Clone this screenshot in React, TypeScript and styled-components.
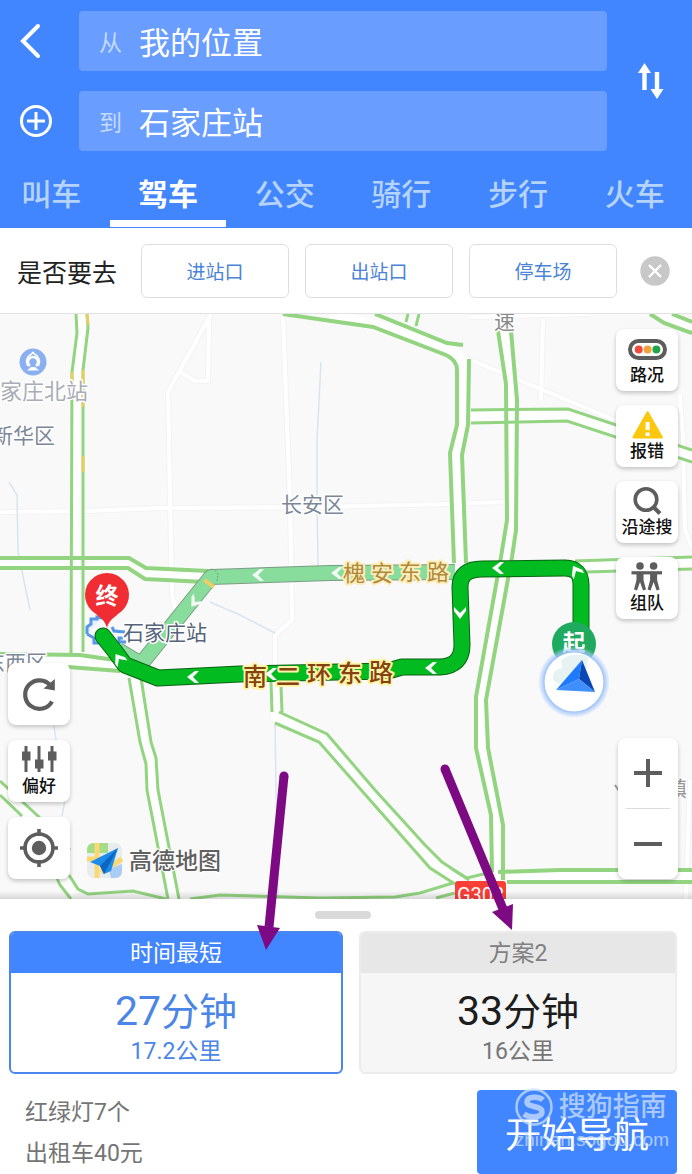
import React, { useState } from 'react';
import styled, { createGlobalStyle } from 'styled-components';

const BLUE = '#4185ff';
const GREY = '#5d5d5d';
const ROAD = '#92d480';

const GlobalStyle = createGlobalStyle`
  *, *::before, *::after { box-sizing: border-box; }
  body {
    margin: 0;
    background: #fff;
    font-family: Roboto, "Noto Sans CJK SC", sans-serif;
    color: #222;
  }
  button, input { font: inherit; color: inherit; }
  button { margin: 0; padding: 0; border: 0; background: none; cursor: pointer; }
`;

const Page = styled.div`
  display: flex;
  flex-direction: column;
  min-height: 100vh;
  overflow: hidden;
`;

/* ---------- header ---------- */

const Header = styled.header`
  background: ${BLUE};
  color: #fff;
  padding-top: 11px;
`;

const RouteForm = styled.form`
  display: grid;
  grid-template-columns: 79px 1fr 85px;
`;

const Side = styled.div`
  display: flex;
  flex-direction: column;
  gap: 20px;
`;

const IconButton = styled.button`
  display: flex;
  align-items: center;
  height: 60px;
  padding-left: 19px;
`;

const SwapButton = styled.button`
  display: flex;
  align-items: center;
  justify-content: center;
`;

const Field = styled.label`
  display: flex;
  align-items: center;
  height: 60px;
  padding-left: 20px;
  border-radius: 4px;
  background: #699dff;
`;

const FieldName = styled.span`
  width: 40px;
  font-size: 23px;
  color: #c4dafc;
`;

const FieldInput = styled.input`
  flex: 1;
  min-width: 0;
  height: 58px;
  padding: 0 0 2px;
  border: 0;
  outline: 0;
  background: transparent;
  font-size: 31px;
`;

const Tabs = styled.nav`
  display: grid;
  grid-template-columns: repeat(6, 1fr);
  margin: 0 -1px 0 -7px;
`;

const Tab = styled.button<{ $active: boolean }>`
  position: relative;
  height: 77px;
  padding-top: 5px;
  font-size: 30px;
  font-weight: ${p => (p.$active ? 700 : 500)};
  color: ${p => (p.$active ? '#fff' : '#b5d3fb')};

  &::after {
    content: '';
    position: absolute;
    inset: auto 0 1px;
    height: 7px;
    background: ${p => (p.$active ? '#fff' : 'transparent')};
  }
`;

/* ---------- suggestions ---------- */

const Suggest = styled.section`
  display: flex;
  align-items: center;
  height: 86px;
  padding: 0 22px 0 17px;
  border-bottom: 1px solid #e2e2e2;
`;

const SuggestTitle = styled.span`
  margin-right: 24px;
  font-size: 25px;
  white-space: nowrap;
`;

const SuggestList = styled.div`
  display: flex;
  flex: 1;
  gap: 16px;
`;

const SuggestButton = styled.button`
  flex: 1;
  height: 54px;
  border: 1px solid #dedee0;
  border-radius: 6px;
  font-size: 19px;
  color: #4b83d6;
`;

const CloseButton = styled.button`
  display: flex;
  margin-left: 23px;
`;

/* ---------- map ---------- */

const MapArea = styled.main`
  position: relative;
  flex: 1;
  min-height: 585px;
`;

const MapCanvas = styled.svg`
  position: absolute;
  inset: 0;
  width: 100%;
  height: 100%;
  background: #f9f9fa;
`;

const Arrows = styled.svg`
  position: absolute;
  inset: 0;
  z-index: 3;
  width: 100%;
  height: 100%;
  overflow: visible;
  pointer-events: none;
`;

const Controls = styled.div<{ $side: 'left' | 'right' }>`
  position: absolute;
  z-index: 1;
  top: 15px;
  bottom: 20px;
  ${p => (p.$side === 'left' ? 'left: 8px' : 'right: 14px')};
  display: flex;
  flex-direction: column;
  align-items: flex-end;
  justify-content: ${p => (p.$side === 'left' ? 'flex-end' : 'flex-start')};
  gap: ${p => (p.$side === 'left' ? 15 : 14)}px;
`;

const MapButton = styled.button`
  display: flex;
  flex-direction: column;
  align-items: center;
  justify-content: center;
  width: 62px;
  height: 62px;
  border-radius: 8px;
  background: #fff;
  box-shadow: 0 2px 4px rgba(0, 0, 0, 0.22);
  font-size: 17px;
  font-weight: 500;
  line-height: 18px;
  color: #111;

  svg { display: block; overflow: visible; }
`;

const Zoom = styled.div`
  display: flex;
  flex-direction: column;
  width: 60px;
  margin-top: auto;
  border-radius: 8px;
  background: #fff;
  box-shadow: 0 2px 4px rgba(0, 0, 0, 0.22);
`;

const ZoomButton = styled.button`
  display: flex;
  align-items: center;
  justify-content: center;
  height: 70px;
`;

const ZoomRule = styled.span`
  height: 1px;
  margin: 0 8px;
  background: #dcdcdc;
`;

/* ---------- bottom sheet ---------- */

const Sheet = styled.section`
  padding: 12px 15px 0 9px;
  background: #fff;
`;

const Handle = styled.div`
  width: 56px;
  height: 8px;
  margin: 0 auto 12px;
  border-radius: 4px;
  background: #d9d9d9;
`;

const Plans = styled.div`
  display: grid;
  grid-template-columns: 21fr 20fr;
  gap: 16px;
`;

const Plan = styled.button<{ $active: boolean }>`
  display: flex;
  flex-direction: column;
  height: 143px;
  overflow: hidden;
  border: 2px solid ${p => (p.$active ? '#4a86ee' : '#ececec')};
  border-radius: 6px;
  background: ${p => (p.$active ? '#fff' : '#f6f6f6')};
  color: ${p => (p.$active ? '#4b86e6' : '#757575')};
`;

const PlanHead = styled.span<{ $active: boolean }>`
  width: 100%;
  padding-top: 2px;
  background: ${p => (p.$active ? BLUE : '#e7e7e7')};
  color: ${p => (p.$active ? '#fff' : '#808080')};
  font-size: 23px;
  line-height: 38px;
`;

const PlanTime = styled.span<{ $active: boolean }>`
  width: 100%;
  padding-top: 15px;
  font-size: 38px;
  line-height: 46px;
  color: ${p => (p.$active ? '#4b86e6' : '#1d1d1d')};
`;

const Minutes = styled.span`
  font-size: 41px;
`;

const PlanLength = styled.span`
  width: 100%;
  font-size: 23px;
  line-height: 34px;
`;

const Footer = styled.div`
  display: flex;
  justify-content: space-between;
  margin-top: 16px;
`;

const Facts = styled.div`
  padding: 2px 0 0 16px;
  font-size: 23px;
  line-height: 41px;
  color: #757575;
`;

const StartWrap = styled.div`
  position: relative;
  width: 200px;
`;

const StartButton = styled.button`
  width: 100%;
  height: 84px;
  border-radius: 4px;
  background: ${BLUE};
  color: #fff;
  font-size: 36px;
`;

const Watermark = styled.div`
  position: absolute;
  top: -6px;
  right: 8px;
  display: grid;
  grid-template-columns: 38px auto;
  column-gap: 6px;
  align-items: center;
  justify-content: end;
  color: rgba(205, 225, 255, 0.75);
  pointer-events: none;
`;

const MarkName = styled.span`
  font-size: 27px;
  font-weight: 500;
  line-height: 46px;
`;

const MarkSite = styled.span`
  grid-column: 1 / -1;
  font-family: "Liberation Sans", sans-serif;
  font-size: 19px;
  line-height: 20px;
  text-align: right;
`;

/* ---------- drawings ---------- */

const minorRoads = [
  'M211 314 L168 392 L170 500 L172 595 L176 612 M209 320 L208 381 L195 381 L180 372',
  'M0 512 L85 511 L160 508 L320 507 L450 504 M468 503 L505 502',
  'M283 317 L290 500 L292 620 L275 635 L275 672',
  'M466 358 L543 390 L615 420 M543 319 L541 400 M470 317 L590 314',
  'M680 395 L683 440 L685 530 L692 548 M690 780 L686 899',
];

const roads = [
  'M76 314 L77 333 L72 372 L71 656',
  'M87 314 L88 328 L83 370 L83 652',
  'M408 314 L406 322 M419 314 L416 326',
  'M471 410 L568 409 L692 450 M471 423 L567 421 L692 462',
  'M575 561 L692 557 M585 572 L692 569',
  'M129 678 L140 742 L146 764 L147 790 L168 899',
  'M141 678 L151 742 L156 758 L158 790 L179 899',
  'M0 781 L38 816 M0 795 L22 816 M38 816 L70 850 M56 876 L60 885 L71 899',
  'M69 875 L78 889 L88 894 L133 891 L166 899',
  'M190 899 L220 895 L320 898 L395 897 L420 893 L453 883',
  'M271 682 L272 712 M281 686 L282 712',
  'M279 712 L327 734 L375 790 L425 845 L442 862 L469 880',
  'M275 723 L319 742 L370 800 L430 868 L455 884',
  'M452 869 L467 878 L492 872 M436 898 L455 893',
];

const wideRoads = [
  'M0 558 L129 558 L146 568 L208 571',
  'M0 568 L128 568 L145 579 L205 582',
  'M283 314 L373 327 L446 355 Q457 360 457 370 L457 425 L450 453 L454 563',
  'M375 314 L447 343 L463 345 M469 359 L468 425 L462 455 L466 563',
  'M498 331 L506 384 L507 520 L501 557 L476 697 L476 748 L491 815 L492 872',
  'M511 331 L517 400 L516 530 L512 557 L486 700 L488 748 L503 825 L503 880',
  'M650 314 L664 323 L692 333 M672 314 L692 322',
  'M0 654 L80 655 L115 660 M68 667 L120 671',
  'M498 872 L560 870 L692 870 M507 882 L692 882',
];

const casings = [
  'M82 314 L83 330 L77 372 L77 660',
  'M0 563 L129 563 L146 574 L208 577',
  'M330 314 L410 335 L455 352 L463 362 L463 425 L456 454 L460 563',
  'M504 331 L512 390 L512 520 L506 557 L481 698 L482 748 L497 820 L498 880',
  'M471 416 L568 415 L692 456',
  'M575 567 L692 563',
  'M660 314 L692 328',
  'M135 678 L146 742 L152 764 L153 790 L173 899',
  'M276 682 L277 716 L323 738 L373 795 L430 858 L462 884',
  'M0 661 L80 661 L118 666',
  'M0 788 L30 816 L64 880 L75 895',
  'M498 876 L692 876',
];

const MAIN_ROUTE =
  'M581 655 L581 585 Q581 568 565 568 L482 569 Q460 569 460 587 L462 645 Q462 666 440 667 L402 667 L388 671 L240 674 L158 678 L125 665 L114 650 L103 636';
const ALT_ROUTE = 'M455 572 L330 573 L211 577 L141 664 L118 650';

const chevrons: [number, number, number, string][] = [
  [498, 568, 0, '#fff'],
  [576, 571, 60, '#fff'],
  [460, 613, -90, '#fff'],
  [431, 668, 0, '#fff'],
  [271, 674, 0, '#fff'],
  [193, 677, 0, '#fff'],
  [119, 659, 55, '#fff'],
  [258, 575, 0, '#f1fbf3'],
  [337, 573, 0, '#f1fbf3'],
  [195, 602, -52, '#f1fbf3'],
];

function CityMap() {
  return (
    <MapCanvas viewBox="0 314 692 585" preserveAspectRatio="xMidYMid slice" role="img" aria-label="路线地图">
      <defs>
        <radialGradient id="glow">
          <stop offset="0.8" stopColor="#8db9fb" />
          <stop offset="0.9" stopColor="#a9caf9" stopOpacity="0.6" />
          <stop offset="1" stopColor="#a9caf9" stopOpacity="0" />
        </radialGradient>
        <linearGradient id="fade" x1="0" y1="0" x2="0" y2="1">
          <stop offset="0" stopColor="#000" stopOpacity="0" />
          <stop offset="1" stopColor="#000" stopOpacity="0.14" />
        </linearGradient>
      </defs>

      <g fill="none" stroke="#f3f3f5" strokeWidth="6">
        {minorRoads.map(d => <path key={d} d={d} />)}
      </g>
      <g fill="none" stroke="#fff" strokeWidth="4">
        {minorRoads.map(d => <path key={d} d={d} />)}
      </g>
      <g fill="none" stroke="#d8e5f0" strokeWidth="1.5">
        <path d="M321 362 L317 440 L317 500 L318 566 M9 482 L17 495 L18 552 L30 610" />
        <path d="M210 602 L240 615 L275 633 M275 724 L276 790 L278 899 M54 726 L56 740 M65 800 L62 816" />
      </g>

      <g fill="none" stroke="#fff" strokeWidth="11">
        {casings.map(d => <path key={d} d={d} />)}
      </g>
      <g fill="none" stroke={ROAD} strokeWidth="3">
        {roads.map(d => <path key={d} d={d} />)}
      </g>
      <g fill="none" stroke={ROAD} strokeWidth="4">
        {wideRoads.map(d => <path key={d} d={d} />)}
      </g>
      <path
        d="M87 314 L88 325 M83 370 L83 407 M83 456 L83 472 M72 372 L72 382"
        fill="none" stroke="#e3cf62" strokeWidth="3"
      />

      <g fill="none" strokeLinejoin="round">
        <path d={ALT_ROUTE} stroke="#7d9c85" strokeWidth="16" />
        <path d={ALT_ROUTE} stroke="#88dc9c" strokeWidth="14" />
        <path d="M204 580 L214 587" stroke="#e8cf6a" strokeWidth="4" />
        <path d="M205 573 Q212 565 218 574 L217 582" stroke="#6fa57c" strokeDasharray="2 1" />
      </g>
      <path
        d="M87 634 L87 627 L91 624 L91 619 L97 619 L97 617 L102 618 M112 627 L114 631 L125 632 M123 638 L119 638 L119 642 L126 642 M103 643 L94 643 L94 638 L87 634"
        fill="#e6f0fc" stroke="#5797e6" strokeWidth="3"
      />
      <g fill="none" strokeLinejoin="round" strokeLinecap="round">
        <path d={MAIN_ROUTE} stroke="#0b6412" strokeWidth="17" />
        <path d={MAIN_ROUTE} stroke="#02bb20" strokeWidth="15" />
      </g>
      {chevrons.map(([x, y, r, fill]) => (
        <path
          key={`${x}-${y}`}
          d="M-6 0 L2 -6 L6 -6 L0 0 L6 6 L2 6 Z"
          fill={fill}
          transform={`translate(${x} ${y}) rotate(${r})`}
        />
      ))}

      <g fontSize="21" fill="#7b8798" stroke="#fff" strokeWidth="3" paintOrder="stroke" strokeLinejoin="round">
        <text x="-8" y="443">新华区</text>
        <text x="281" y="512">长安区</text>
        <text x="-16" y="670">东西区</text>
        <text x="123" y="640" fill="#56637a">石家庄站</text>
        <text x="-22" y="399" fontSize="22" fill="#a9adb7">石家庄北站</text>
        <text x="494" y="329" fill="#8a8a8a">速</text>
        <text x="666" y="796" fill="#9a9a9a">镇</text>
      </g>
      <path d="M615 785 L619 791" stroke="#9a9a9a" strokeWidth="2" />
      <text
        x="343 371 399 427" y="581 581 580 580" fontSize="22"
        fill="#b0883c" stroke="#fdedb8" strokeWidth="4" paintOrder="stroke" strokeLinejoin="round"
      >槐安东路</text>
      <text
        x="243 276 307 338 369" y="685 685 683 682 681" fontSize="24" fontWeight="500"
        fill="#83420f" stroke="#fff3a6" strokeWidth="4" paintOrder="stroke" strokeLinejoin="round"
      >南二环东路</text>

      <circle cx="33" cy="362" r="13.5" fill="#8bb0f2" />
      <path
        d="M30 366 A5 5 0 1 1 36 366"
        fill="none" stroke="#fff" strokeWidth="2.4"
      />
      <path
        d="M28 366 A8 8 0 0 1 27 359 Q29 355 31 354.5 L33 352.5 L35 354.5 Q37 355 39 359 A8 8 0 0 1 38 366"
        fill="none" stroke="#fff" strokeWidth="1.6"
      />
      <path d="M27 370.5 L31 367 L35 367 L39 370.5 Z" fill="#fff" />

      <path d="M107 628 C105 620 100 618 96 614 A22 22 0 1 1 118 614 C114 618 109 620 107 628 Z" fill="#ef2d32" />
      <text x="107" y="604" fontSize="23" fontWeight="700" fill="#fff" textAnchor="middle">终</text>

      <circle cx="574" cy="644" r="22" fill="#20aa5f" />
      <text x="574" y="651" fontSize="23" fontWeight="700" fill="#fff" textAnchor="middle">起</text>
      <circle cx="574" cy="682" r="36" fill="url(#glow)" />
      <circle cx="574" cy="682" r="29.5" fill="#fff" />
      <path
        d="M561 660 Q574 651 588 657 L587 668 L578 672 L564 684 Q552 684 553 676 Q554 669 562 668 Z"
        fill="#e6f3f2"
      />
      <path d="M582 660 L556 690 L579 679 Z" fill="#1e7bff" />
      <path d="M582 660 L595 692 L579 679 Z" fill="#0a49b5" />
      <path d="M556 690 L579 679 L595 692 Z" fill="#3f8fff" />

      <rect x="455" y="881" width="51" height="24" rx="3" fill="#fb3f37" />
      <text x="457" y="902" fontSize="20" fill="#fff">G308</text>

      <g>
        <rect x="87" y="843" width="35" height="35" rx="7" fill="#e9ecee" />
        <path d="M94 843 L108 843 L108 853 L87 853 L87 850 Q87 843 94 843 Z" fill="#a5dc87" />
        <path d="M109 869 L122 864 L122 871 Q122 878 115 878 L111 878 Z" fill="#a9cdf7" />
        <path d="M97 843 L97 878 M87 859 L101 859 M101 872 L122 859" stroke="#fbd873" strokeWidth="5" fill="none" />
        <path d="M118 848 L90 862 L100 866 L104 874 L111 871 Z" fill="#1c8bea" />
        <path d="M118 848 L100 866 L104 874 Z" fill="#0b66bf" />
        <text
          x="129" y="869" fontSize="23" fontWeight="500" fill="#606060"
          stroke="#fff" strokeWidth="2" paintOrder="stroke"
        >高德地图</text>
      </g>

      <rect x="0" y="891" width="692" height="8" fill="url(#fade)" />
    </MapCanvas>
  );
}

const GuideArrows = () => (
  <Arrows viewBox="0 314 692 585" preserveAspectRatio="xMidYMid slice" aria-hidden="true">
    <g stroke="#7d0a82" strokeWidth="9">
      <path d="M284 776 L269 927" />
      <path d="M445 769 L503 909" />
    </g>
    <g fill="#7d0a82">
      <circle cx="284" cy="776" r="4.5" />
      <circle cx="445" cy="769" r="4.5" />
      <path d="M257 925 L280 928 L266 950 Z" />
      <path d="M492 912 L513 904 L512 930 Z" />
    </g>
  </Arrows>
);

const TrafficIcon = () => (
  <svg width="42" height="30" viewBox="0 0 42 30" aria-hidden="true">
    <rect x="4" y="5" width="35" height="17" rx="8.5" fill="#fff" stroke={GREY} strokeWidth="4" />
    <circle cx="12.7" cy="13.6" r="4" fill="#ee4b3c" />
    <circle cx="21.6" cy="13.6" r="4" fill="#f3a13a" />
    <circle cx="30.4" cy="13.6" r="4" fill="#21a54a" />
  </svg>
);

const ReportIcon = () => (
  <svg width="42" height="30" viewBox="0 0 42 30" aria-hidden="true">
    <path d="M21.6 0.5 L35.6 25.3 L7.6 25.3 Z" fill="#fbc80f" stroke="#fbc80f" strokeWidth="2.5" strokeLinejoin="round" />
    <path d="M21.6 10 L21.6 18 M21.6 20.5 L21.6 24" stroke="#fff" strokeWidth="4" />
  </svg>
);

const SearchIcon = () => (
  <svg width="42" height="30" viewBox="0 0 42 30" aria-hidden="true">
    <circle cx="20" cy="11.5" r="10.8" fill="none" stroke={GREY} strokeWidth="3.6" />
    <path d="M27.5 19 L34 25.5" stroke={GREY} strokeWidth="4" />
  </svg>
);

const TeamIcon = () => (
  <svg width="42" height="30" viewBox="0 0 42 30" aria-hidden="true">
    <g fill={GREY}>
      <circle cx="14" cy="2" r="3.8" />
      <circle cx="27.6" cy="2" r="3.8" />
      <rect x="5.5" y="7.2" width="30.5" height="3.2" />
      <path d="M10.5 8 H17.5 V16 L20 25.5 L17 26.5 L14 18 L11 26.5 L8 25.5 L10.5 16 Z" />
      <path d="M24.1 8 H31.1 V16 L33.6 25.5 L30.6 26.5 L27.6 18 L24.6 26.5 L21.6 25.5 L24.1 16 Z" />
    </g>
  </svg>
);

const RefreshIcon = () => (
  <svg width="42" height="42" viewBox="0 0 42 42" aria-hidden="true">
    <path d="M34 28.5 A14.3 14.3 0 1 1 32.5 12.5" fill="none" stroke={GREY} strokeWidth="4.2" />
    <path d="M36.8 6 L36.8 17.5 L25.5 15.5 Z" fill={GREY} />
  </svg>
);

const PreferenceIcon = () => (
  <svg width="42" height="30" viewBox="0 0 42 30" aria-hidden="true">
    <path d="M8 -1 V25 M21 -1 V25 M34 -1 V25" stroke={GREY} strokeWidth="3" />
    <path d="M4 4.5 h8.5 v9 h-8.5 z M17 12.5 h8.5 v9 h-8.5 z M30 4.5 h8.5 v9 h-8.5 z" fill={GREY} />
  </svg>
);

const LocateIcon = () => (
  <svg width="42" height="42" viewBox="0 0 42 42" aria-hidden="true">
    <circle cx="21" cy="21" r="14" fill="none" stroke={GREY} strokeWidth="3.6" />
    <circle cx="21" cy="21" r="7.2" fill={GREY} />
    <path d="M21 2 V9 M21 33 V40 M2 21 H9 M33 21 H40" stroke={GREY} strokeWidth="3.6" />
  </svg>
);

const modes = ['叫车', '驾车', '公交', '骑行', '步行', '火车'];
const places = ['进站口', '出站口', '停车场'];
const tools = [
  { name: '路况', Icon: TrafficIcon },
  { name: '报错', Icon: ReportIcon },
  { name: '沿途搜', Icon: SearchIcon },
  { name: '组队', Icon: TeamIcon },
];
const plans = [
  { title: '时间最短', minutes: 27, length: '17.2公里' },
  { title: '方案2', minutes: 33, length: '16公里' },
];

export default function App() {
  const [mode, setMode] = useState('驾车');
  const [plan, setPlan] = useState(0);
  const [from, setFrom] = useState('我的位置');
  const [to, setTo] = useState('石家庄站');

  return (
    <Page>
      <GlobalStyle />
      <Header>
        <RouteForm onSubmit={e => e.preventDefault()}>
          <Side>
            <IconButton type="button" aria-label="返回">
              <svg width="24" height="36" viewBox="0 0 24 36" aria-hidden="true">
                <path d="M19 3 L4 18 L19 33" fill="none" stroke="#fff" strokeWidth="4" strokeLinecap="round" />
              </svg>
            </IconButton>
            <IconButton type="button" aria-label="添加途经点">
              <svg width="34" height="34" viewBox="0 0 34 34" aria-hidden="true">
                <circle cx="17" cy="17" r="14.5" fill="none" stroke="#fff" strokeWidth="3" />
                <path d="M17 8 V26 M8 17 H26" stroke="#fff" strokeWidth="3" />
              </svg>
            </IconButton>
          </Side>
          <Side>
            <Field>
              <FieldName>从</FieldName>
              <FieldInput value={from} onChange={e => setFrom(e.target.value)} />
            </Field>
            <Field>
              <FieldName>到</FieldName>
              <FieldInput value={to} onChange={e => setTo(e.target.value)} />
            </Field>
          </Side>
          <SwapButton type="button" aria-label="交换起点和终点">
            <svg width="28" height="38" viewBox="0 0 28 38" aria-hidden="true">
              <path d="M8.5 28 V8 M21 10 V30" stroke="#fff" strokeWidth="4.4" fill="none" />
              <path d="M8.5 1 L15 11 L2 11 Z M21 37 L14.5 27 L27.5 27 Z" fill="#fff" />
            </svg>
          </SwapButton>
        </RouteForm>
        <Tabs>
          {modes.map(m => (
            <Tab key={m} type="button" $active={m === mode} onClick={() => setMode(m)}>{m}</Tab>
          ))}
        </Tabs>
      </Header>

      <Suggest>
        <SuggestTitle>是否要去</SuggestTitle>
        <SuggestList>
          {places.map(p => <SuggestButton key={p} type="button">{p}</SuggestButton>)}
        </SuggestList>
        <CloseButton type="button" aria-label="关闭">
          <svg width="30" height="30" viewBox="0 0 30 30" aria-hidden="true">
            <circle cx="15" cy="15" r="14.7" fill="#c8c8c8" />
            <path d="M9 9 L21 21 M21 9 L9 21" stroke="#fff" strokeWidth="2.4" />
          </svg>
        </CloseButton>
      </Suggest>

      <MapArea>
        <CityMap />
        <Controls $side="left">
          <MapButton type="button" aria-label="刷新"><RefreshIcon /></MapButton>
          <MapButton type="button"><PreferenceIcon />偏好</MapButton>
          <MapButton type="button" aria-label="定位"><LocateIcon /></MapButton>
        </Controls>
        <Controls $side="right">
          {tools.map(({ name, Icon }) => (
            <MapButton key={name} type="button"><Icon />{name}</MapButton>
          ))}
          <Zoom>
            <ZoomButton type="button" aria-label="放大">
              <svg width="28" height="28" viewBox="0 0 28 28" aria-hidden="true">
                <path d="M14 0 V28 M0 14 H28" stroke={GREY} strokeWidth="4" />
              </svg>
            </ZoomButton>
            <ZoomRule />
            <ZoomButton type="button" aria-label="缩小">
              <svg width="28" height="28" viewBox="0 0 28 28" aria-hidden="true">
                <path d="M0 14 H28" stroke={GREY} strokeWidth="4" />
              </svg>
            </ZoomButton>
          </Zoom>
        </Controls>
        <GuideArrows />
      </MapArea>

      <Sheet>
        <Handle />
        <Plans>
          {plans.map((p, i) => (
            <Plan key={p.title} type="button" $active={i === plan} onClick={() => setPlan(i)}>
              <PlanHead $active={i === plan}>{p.title}</PlanHead>
              <PlanTime $active={i === plan}><Minutes>{p.minutes}</Minutes>分钟</PlanTime>
              <PlanLength>{p.length}</PlanLength>
            </Plan>
          ))}
        </Plans>
        <Footer>
          <Facts>
            <div>红绿灯7个</div>
            <div>出租车40元</div>
          </Facts>
          <StartWrap>
            <StartButton type="button">开始导航</StartButton>
            <Watermark>
              <svg width="38" height="38" viewBox="0 0 38 38" aria-hidden="true">
                <circle cx="19" cy="19" r="17.5" fill="none" stroke="currentColor" strokeWidth="2.5" />
                <path
                  d="M28 12 C24 8 12 8 12 14 C12 20 27 17 27 24 C27 30 14 30 9 26"
                  fill="none" stroke="currentColor" strokeWidth="5.5"
                />
              </svg>
              <MarkName>搜狗指南</MarkName>
              <MarkSite>zhinan.sogou.com</MarkSite>
            </Watermark>
          </StartWrap>
        </Footer>
      </Sheet>
    </Page>
  );
}
